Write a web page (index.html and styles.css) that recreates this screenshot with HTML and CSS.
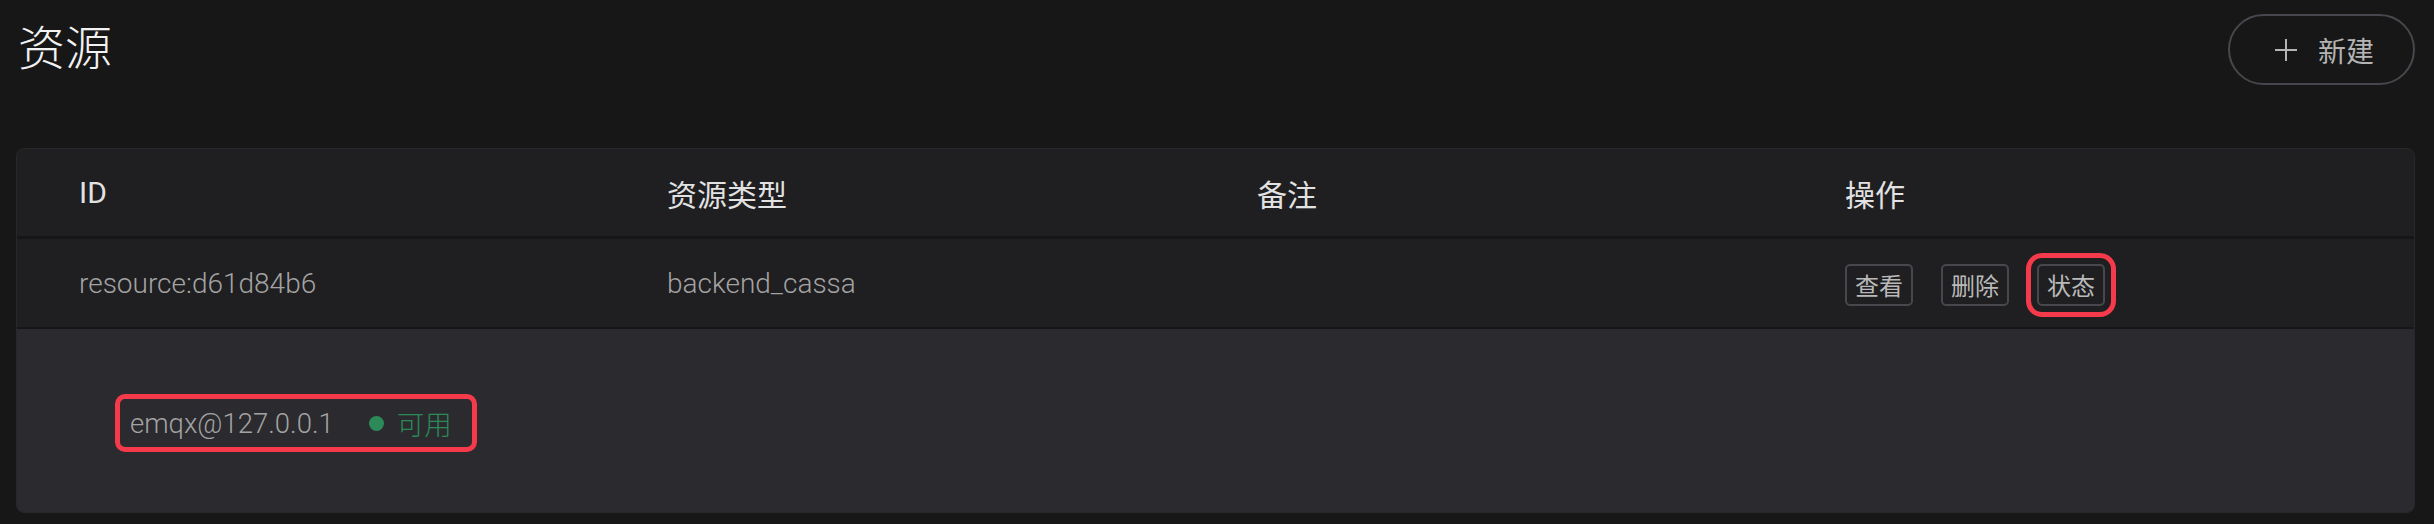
FILE: index.html
```html
<!DOCTYPE html>
<html lang="zh-CN">
<head>
  <meta charset="UTF-8" />
  <meta name="viewport" content="width=device-width, initial-scale=1.0" />
  <title>资源</title>
  <link rel="stylesheet" href="styles.css">
</head>
<body>
  <div class="page">
    <div class="page-header">
      <h1 class="page-title">资源</h1>
      <button class="create-btn" type="button">
        <svg class="plus-icon" viewBox="0 0 24 24" width="24" height="24">
          <path d="M12 1v22M1 12h22" />
        </svg>
        <span>新建</span>
      </button>
    </div>

    <div class="resource-table">
      <div class="table-head">
        <div class="cell">ID</div>
        <div class="cell">资源类型</div>
        <div class="cell">备注</div>
        <div class="cell">操作</div>
      </div>

      <div class="table-row">
        <div class="cell">resource:d61d84b6</div>
        <div class="cell">backend_cassa</div>
        <div class="cell"></div>
        <div class="cell actions">
          <button class="action-btn" type="button">查看</button>
          <button class="action-btn" type="button">删除</button>
          <button class="action-btn highlighted" type="button">状态</button>
        </div>
      </div>

      <div class="row-expand">
        <div class="node-status">
          <span class="node-name">emqx@127.0.0.1</span>
          <span class="status-dot"></span>
          <span class="status-text">可用</span>
        </div>
      </div>
    </div>
  </div>
</body>
</html>
```

FILE: styles.css
```css
* {
  box-sizing: border-box;
  margin: 0;
  padding: 0;
}

body {
  background-color: #171717;
  color: #e0e0e0;
  font-family: Roboto, "Noto Sans CJK SC", sans-serif;
}

.page {
  padding: 0 19px 0 16px;
}

.page-header {
  display: flex;
  align-items: center;
  justify-content: space-between;
  height: 99px;
  margin-bottom: 49px;
}

.page-title {
  font-family: "Noto Sans CJK SC", sans-serif;
  font-size: 47px;
  font-weight: 300;
  line-height: 1;
  color: #f2f2f2;
  padding-left: 2px;
  margin-top: -10px;
}

.create-btn {
  display: flex;
  align-items: center;
  gap: 20px;
  width: 187px;
  height: 71px;
  padding-left: 44px;
  background: transparent;
  border: 2px solid #48474d;
  border-radius: 36px;
  color: #b4b4b4;
  font-family: "Noto Sans CJK SC", sans-serif;
  font-size: 28px;
  cursor: pointer;
}

.plus-icon {
  fill: none;
  stroke: #b4b4b4;
  stroke-width: 2;
}

.resource-table {
  background-color: #1f1e20;
  border: 1px solid #28272a;
  border-radius: 8px;
  overflow: hidden;
}

.table-head,
.table-row {
  display: grid;
  grid-template-columns: 588px 590px 588px 1fr;
  align-items: center;
  padding-left: 62px;
}

.table-head {
  height: 90px;
  border-bottom: 3px solid #161616;
  font-size: 30px;
  color: #e2e2e2;
}

.table-row {
  height: 90px;
  border-bottom: 2px solid #161616;
  font-size: 28px;
  font-weight: 300;
  color: #a3a3a3;
}

.actions {
  display: flex;
  gap: 28px;
  padding-top: 3px;
}

.action-btn {
  height: 42px;
  padding: 0 8px;
  background: transparent;
  border: 2px solid #48474d;
  border-radius: 5px;
  color: #b9b9b9;
  font-family: "Noto Sans CJK SC", sans-serif;
  font-size: 24px;
  line-height: 38px;
  cursor: pointer;
}

.action-btn.highlighted {
  outline: 5px solid #f43a4b;
  outline-offset: 6px;
}

.row-expand {
  background-color: #2b2a2f;
  padding: 65px 0 60px 98px;
}

.node-status {
  display: inline-flex;
  align-items: center;
  height: 58px;
  padding: 0 20px 0 10px;
  border: 5px solid #f43a4b;
  border-radius: 10px;
  font-size: 27.5px;
  font-weight: 300;
}

.node-name {
  color: #a3a3a3;
}

.status-dot {
  width: 15px;
  height: 15px;
  margin: 0 13px 0 35px;
  border-radius: 50%;
  background-color: #2c8a58;
}

.status-text {
  font-family: "Noto Sans CJK SC", sans-serif;
  font-weight: 300;
  color: #2c8a58;
}
```
